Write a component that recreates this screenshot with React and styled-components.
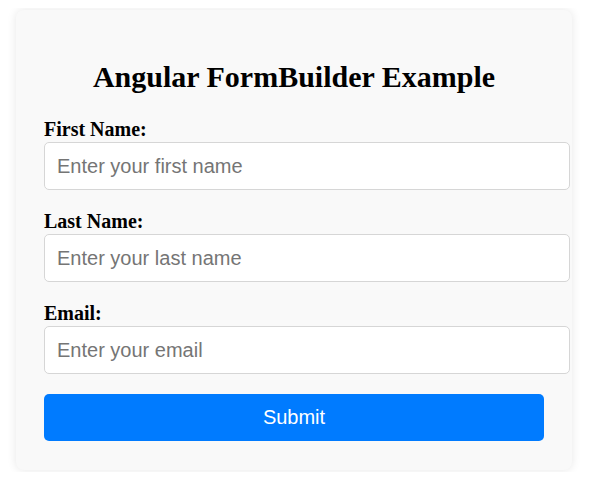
import styled, { createGlobalStyle } from 'styled-components';

const GlobalStyle = createGlobalStyle`
  body {
    margin: 8px;
    background: #ffffff;
    font-family: 'Liberation Serif', 'Times New Roman', serif;
  }
`;

const Card = styled.div`
  width: 500px;
  margin: 2px 8px;
  padding: 28px 28px 29px;
  background: #f9f9f9;
  border-radius: 8px;
  box-shadow: 0 0 10px rgba(0, 0, 0, 0.1);
`;

const Title = styled.h2`
  margin: 22px 0 24px;
  font-size: 30px;
  font-weight: bold;
  text-align: center;
  color: #000;
`;

const Field = styled.div`
  margin-bottom: 20px;
`;

const Label = styled.label`
  display: block;
  margin-bottom: 2px;
  font-size: 20px;
  line-height: 22px;
  font-weight: bold;
  color: #000;
`;

const Input = styled.input`
  display: block;
  width: 100%;
  margin: 0;
  padding: 12px;
  border: 1px solid #d6d6d6;
  border-radius: 5px;
  background: #fff;
  font-family: 'Liberation Sans', Arial, sans-serif;
  font-size: 20px;
  line-height: 22px;
  color: #333;
  outline: none;

  &::placeholder {
    color: #757575;
  }
`;

const SubmitButton = styled.button`
  display: block;
  width: 100%;
  padding: 12px;
  border: none;
  border-radius: 5px;
  background: #007bff;
  color: #fff;
  font-family: 'Liberation Sans', Arial, sans-serif;
  font-size: 20px;
  line-height: 23px;
  cursor: pointer;
`;

const fields = [
  { id: 'firstName', label: 'First Name:', placeholder: 'Enter your first name', type: 'text' },
  { id: 'lastName', label: 'Last Name:', placeholder: 'Enter your last name', type: 'text' },
  { id: 'email', label: 'Email:', placeholder: 'Enter your email', type: 'email' },
];

export default function App() {
  return (
    <>
      <GlobalStyle />
      <Card>
        <Title>Angular FormBuilder Example</Title>
        <form onSubmit={(e) => e.preventDefault()}>
          {fields.map((f) => (
            <Field key={f.id}>
              <Label htmlFor={f.id}>{f.label}</Label>
              <Input id={f.id} type={f.type} placeholder={f.placeholder} />
            </Field>
          ))}
          <SubmitButton type="submit">Submit</SubmitButton>
        </form>
      </Card>
    </>
  );
}
